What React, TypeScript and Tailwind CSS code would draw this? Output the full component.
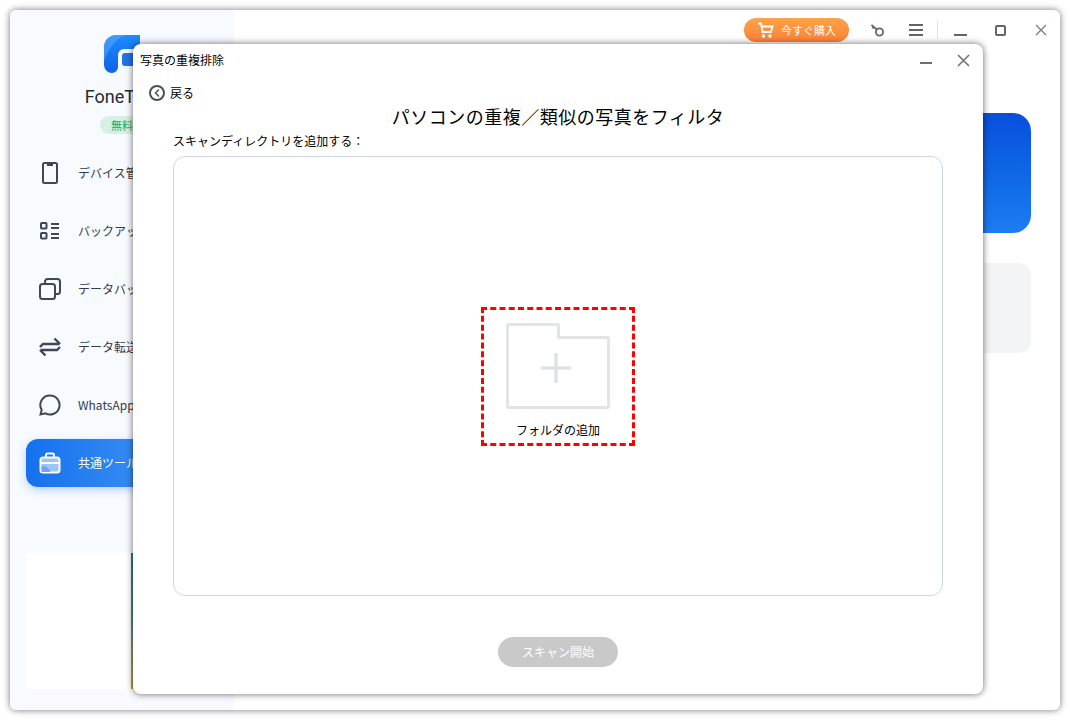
import { ChevronLeft } from 'lucide-react'

const FONT = "font-['Noto_Sans_CJK_JP','Liberation_Sans',sans-serif]"

const navItems = [
  { id: 'device', label: 'デバイス管理', icon: <PhoneIcon /> },
  { id: 'backup', label: 'バックアップ', icon: <ListIcon /> },
  { id: 'data', label: 'データバックアップ', icon: <CopyIcon /> },
  { id: 'transfer', label: 'データ転送', icon: <SwapIcon /> },
  { id: 'whatsapp', label: 'WhatsApp', icon: <ChatIcon /> },
]

function PhoneIcon() {
  return (
    <svg width="24" height="24" viewBox="0 0 24 24" fill="none" stroke="#3f4756" strokeWidth="2">
      <rect x="5" y="2" width="14" height="20" rx="1.5" />
      <path d="M9 3h6v2H9z" fill="#3f4756" stroke="none" />
    </svg>
  )
}

function ListIcon() {
  return (
    <svg width="24" height="24" viewBox="0 0 24 24" fill="none" stroke="#3f4756" strokeWidth="2">
      <rect x="3" y="4" width="5.5" height="5.5" rx="0.8" />
      <rect x="3" y="14" width="5.5" height="5.5" rx="0.8" />
      <path d="M13 5h8M13 9h8M13 15h8M13 19h8" />
    </svg>
  )
}

function CopyIcon() {
  return (
    <svg width="24" height="24" viewBox="0 0 24 24" fill="none" stroke="#3f4756" strokeWidth="2">
      <rect x="2" y="7" width="15" height="15" rx="2.5" />
      <path d="M7 7V4.5A2.5 2.5 0 0 1 9.500 2h10A2.500 2.500 0 0 1 22 4.500v10a2.500 2.500 0 0 1-2.500 2.500H17" />
    </svg>
  )
}

function SwapIcon() {
  return (
    <svg width="24" height="24" viewBox="0 0 24 24" fill="none" stroke="#3f4756" strokeWidth="2.4">
      <path d="M2 12 L5 9 H21.500 M16.500 3.500 L22 9" />
      <path d="M22 12 L19 15 H2.500 M7.500 20.500 L2 15" />
    </svg>
  )
}

function ChatIcon() {
  return (
    <svg width="24" height="24" viewBox="0 0 24 24" fill="none" stroke="#3f4756" strokeWidth="2">
      <path d="M12 2.500a9.500 9.500 0 1 1-4.600 17.800L2.500 21.500l1.200-4.600A9.500 9.500 0 0 1 12 2.500z" />
    </svg>
  )
}

function BagIcon() {
  return (
    <svg width="24" height="24" viewBox="0 0 24 24" fill="none">
      <rect x="2.500" y="6.500" width="19" height="15" rx="2.500" fill="#9cc4f8" stroke="#fff" strokeWidth="2" />
      <path d="M8 6.500V4a1.500 1.500 0 0 1 1.500-1.500h5A1.500 1.500 0 0 1 16 4v2.500" stroke="#fff" strokeWidth="2" />
      <path d="M3.500 15a9 8 0 0 1 9 6H4a1 1 0 0 1-.5-1z" fill="#6ea4f2" />
      <path d="M3 12h18" stroke="#fff" strokeWidth="2" />
    </svg>
  )
}

function Logo() {
  return (
    <svg width="36" height="38" viewBox="0 0 36 38">
      <defs>
        <linearGradient id="logoGrad" x1="0" y1="0" x2="0" y2="1">
          <stop offset="0" stopColor="#1f8bff" />
          <stop offset="1" stopColor="#0d63e6" />
        </linearGradient>
      </defs>
      <path d="M12 0h24v14H20a6 6 0 0 0-6 6v12a6 6 0 0 1-6 6 8 8 0 0 1-8-8V12A12 12 0 0 1 12 0z" fill="url(#logoGrad)" />
      <path d="M0 12A12 12 0 0 1 12 0h10C10 4 4 16 0 26z" fill="#7fbcff" opacity="0.35" />
      <rect x="18" y="18" width="18" height="13" rx="3" fill="#2273e8" />
    </svg>
  )
}

function CartIcon() {
  return (
    <svg width="18" height="18" viewBox="0 0 18 18" fill="none" stroke="#fff" strokeWidth="1.800">
      <path d="M1 2.500h3l1.500 8.500h8.500l1.500-5.500H5" />
      <circle cx="6.500" cy="15" r="0.800" fill="#fff" />
      <circle cx="13" cy="15" r="0.800" fill="#fff" />
    </svg>
  )
}

function KeyIcon() {
  return (
    <svg width="16" height="16" viewBox="0 0 16 16" fill="none" stroke="#5f6670" strokeWidth="1.800">
      <circle cx="10.500" cy="10" r="3.600" />
      <path d="M7.800 7.500 L2.500 2.800 M4.800 5 L3.400 6.300" />
    </svg>
  )
}

function FolderAdd() {
  return (
    <svg width="104" height="86" viewBox="0 0 104 86" fill="none" stroke="#e2e5e8" strokeWidth="3">
      <path d="M1.500 2.500a1 1 0 0 1 1-1h49a1 1 0 0 1 1 1v12h49a1 1 0 0 1 1 1v68a1 1 0 0 1-1 1h-99a1 1 0 0 1-1-1z" />
      <path d="M35 45h30M50 30v30" strokeWidth="3.500" stroke="#dfe2e5" />
    </svg>
  )
}

export default function App() {
  return (
    <div className={`h-[720px] w-[1070px] overflow-hidden bg-white p-[10px] ${FONT}`}>
      <div className="relative flex h-[700px] w-[1050px] rounded-[6px] bg-white shadow-[0_0_7px_rgba(0,0,0,0.55)]">
        {/* Sidebar */}
        <aside className="flex w-[224px] shrink-0 flex-col rounded-l-[6px] bg-[#f7faff] px-4">
          <div className="flex flex-col items-center pt-[25px]">
            <Logo />
            <div className="mt-[12px] h-[24px] font-['Roboto',sans-serif] text-[18px] leading-[24px] text-[#222a35]">FoneTool</div>
            <div className="mt-[7px] flex h-[18px] w-[44px] items-center justify-center rounded-full bg-[#d5f1e3] text-[11px] text-[#1aa866]">無料</div>
          </div>
          <nav className="mt-[15px] flex flex-col gap-[10px]">
            {navItems.map((item) => (
              <div key={item.id} className="flex h-[48px] items-center gap-[16px] pl-[12px] text-[12px] text-[#333b4a]">
                <span className="flex w-[24px] justify-center">{item.icon}</span>
                <span>{item.label}</span>
              </div>
            ))}
            <div className="flex h-[48px] items-center gap-[16px] rounded-[12px] bg-gradient-to-r from-[#1470ee] to-[#4a9ef5] pl-[12px] text-[12px] text-white shadow-[0_3px_8px_rgba(40,120,240,0.3)]">
              <span className="flex w-[24px] justify-center"><BagIcon /></span>
              <span>共通ツール</span>
            </div>
          </nav>
          {/* ad slot */}
          <div className="mt-[66px] flex h-[136px] rounded-[4px] bg-white">
            <div className="ml-[105px] h-full w-[2px] bg-gradient-to-b from-[#2a7a9a] via-[#4d8a8a] to-[#c9a21a]" />
          </div>
        </aside>

        {/* Main content */}
        <main className="flex min-w-0 flex-1 flex-col">
          <header className="flex h-[38px] items-center justify-end pt-[2px]">
            <button className="flex h-[24px] w-[105px] items-center justify-center gap-[6px] rounded-full bg-gradient-to-b from-[#ffa346] to-[#f9803a] text-[11px] text-white">
              <CartIcon />
              今すぐ購入
            </button>
            <span className="ml-[20px] flex w-[16px] justify-center"><KeyIcon /></span>
            <span className="ml-[24px] flex w-[14px] flex-col gap-[3px]">
              <i className="h-[2px] bg-[#5f6670]" />
              <i className="h-[2px] bg-[#5f6670]" />
              <i className="h-[2px] bg-[#5f6670]" />
            </span>
            <span className="ml-[14px] h-[18px] w-px bg-[#dfe3e8]" />
            <span className="ml-[16px] mt-[10px] h-[2px] w-[13px] bg-[#5f6670]" />
            <span className="ml-[28px] h-[11px] w-[11px] rounded-[2px] border-2 border-[#5f6670]" />
            <span className="ml-[29px] mr-[13px]">
              <svg width="12" height="12" viewBox="0 0 12 12" stroke="#7a808a" strokeWidth="1.400">
                <path d="M1 1l10 10M11 1L1 11" />
              </svg>
            </span>
          </header>
          <div className="mt-[65px] flex flex-col items-end gap-[30px] pr-[29px]">
            <div className="h-[120px] w-[300px] rounded-[18px] bg-gradient-to-b from-[#0a4fdc] to-[#1c7df0]" />
            <div className="h-[90px] w-[300px] rounded-[12px] bg-[#f3f4f6]" />
          </div>
        </main>

        {/* Dialog */}
        <div className="absolute left-[123px] top-[34px] flex h-[650px] w-[850px] flex-col rounded-[8px] bg-white shadow-[0_0_7px_rgba(0,0,0,0.6)]">
          <div className="flex h-[32px] items-center justify-between pl-[7px] pr-[13px] text-[12px] text-black">
            <span>写真の重複排除</span>
            <span className="flex items-center gap-[25px]">
              <span className="mt-[6px] h-[2px] w-[12px] bg-[#6b7078]" />
              <svg width="13" height="13" viewBox="0 0 13 13" stroke="#6b7078" strokeWidth="1.500">
                <path d="M1 1l11 11M12 1L1 12" />
              </svg>
            </span>
          </div>
          <div className="mt-[9px] flex h-[16px] items-center gap-[5px] pl-[16px] text-[12px] text-black">
            <span className="flex h-[16px] w-[16px] items-center justify-center rounded-full border-2 border-[#4a4f57]">
              <ChevronLeft size={12} strokeWidth={3} color="#4a4f57" />
            </span>
            戻る
          </div>
          <h1 className="mt-[2px] h-[26px] pl-[-2px] text-center text-[18px] leading-[26px] font-normal tracking-[0.5px] text-black">パソコンの重複／類似の写真をフィルタ</h1>
          <div className="mt-[3px] h-[18px] pl-[40px] text-[12px] leading-[18px] text-black">スキャンディレクトリを追加する：</div>
          <div className="mx-[40px] mt-[6px] flex h-[440px] items-center justify-center rounded-[12px] border border-[#cdd6e4]">
            <div className="mt-[1px] flex h-[139px] w-[154px] flex-col items-center border-[3px] border-dashed border-[#ff0000] pt-[13px]">
              <FolderAdd />
              <span className="mt-[13px] text-[12px] leading-[16px] text-black">フォルダの追加</span>
            </div>
          </div>
          <div className="mt-[41px] flex justify-center">
            <button className="h-[30px] w-[120px] rounded-full bg-[#c9c9c9] text-[12px] text-white">スキャン開始</button>
          </div>
        </div>
      </div>
    </div>
  )
}
